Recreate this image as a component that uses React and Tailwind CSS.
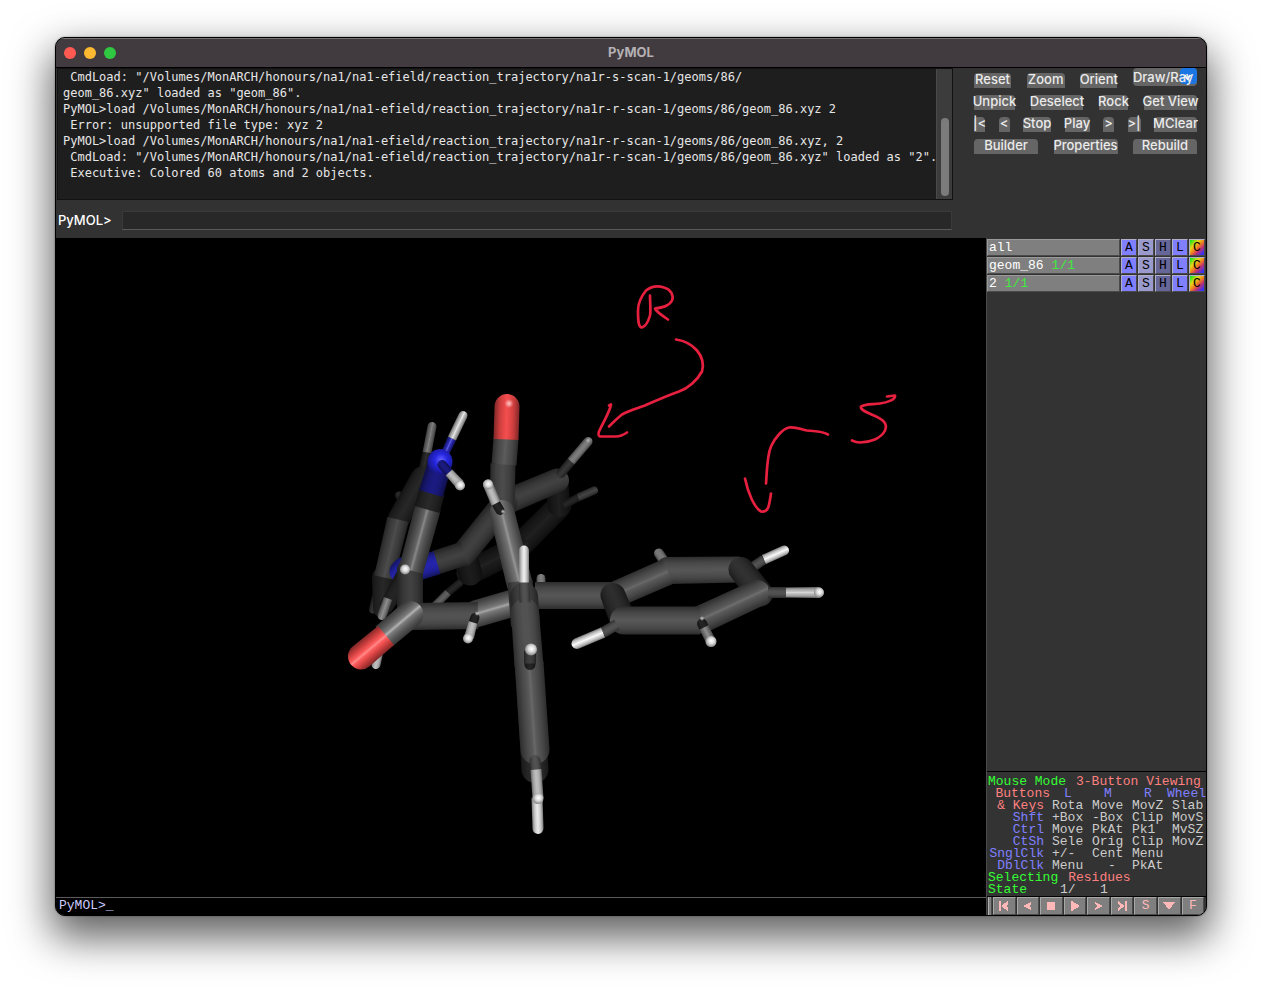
import React from "react";

const logLines = [
  ' CmdLoad: "/Volumes/MonARCH/honours/na1/na1-efield/reaction_trajectory/na1r-s-scan-1/geoms/86/',
  'geom_86.xyz" loaded as "geom_86".',
  "PyMOL>load /Volumes/MonARCH/honours/na1/na1-efield/reaction_trajectory/na1r-r-scan-1/geoms/86/geom_86.xyz 2",
  " Error: unsupported file type: xyz 2",
  "PyMOL>load /Volumes/MonARCH/honours/na1/na1-efield/reaction_trajectory/na1r-r-scan-1/geoms/86/geom_86.xyz, 2",
  ' CmdLoad: "/Volumes/MonARCH/honours/na1/na1-efield/reaction_trajectory/na1r-r-scan-1/geoms/86/geom_86.xyz" loaded as "2".',
  " Executive: Colored 60 atoms and 2 objects.",
];

/* Sticks, back to front: x1, y1, x2, y2, width at start, width at end, colour, shine, caps (s = start, e = end) */
const C1 = [26, 26, 26];
const C2 = [36, 36, 36];
const C3 = [62, 62, 62];
const C4 = [82, 82, 82];
const C5 = [100, 100, 100];
const H1 = [125, 125, 125];
const H2 = [188, 188, 188];
const H3 = [222, 222, 222];
const RED = [232, 70, 70];
const BLUE = [26, 26, 128];
const BLUE2 = [36, 36, 170];
const NB = [38, 38, 225];

const sticks = [
  /* rear ring */
  [559, 506, 517, 548, 24, 25, C1, 6, "se"],
  [517, 548, 469, 572, 25, 25, C1, 8, "se"],
  [459, 583, 448, 592, 8, 8, C2, 4, "s"],
  [448, 592, 433, 607, 8, 8, [95, 95, 95], 0, "e"],
  [465, 553, 470, 573, 24, 24, C1, 2, "se"],
  [557, 480, 559, 505, 22, 23, C1, 6, "se"],
  [557, 480, 505, 502, 24, 25, C3, 4, "se"],
  [505, 502, 464, 553, 25, 25, C3, 2, "se"],
  [561, 473, 571, 461, 9, 9, [52, 52, 52], 4, "s"],
  [571, 461, 588, 441, 9, 9, H1, 0, "e"],
  [588, 440, 588, 440, 5, 5, H1, 60, "glow"],
  [567, 503, 578, 497, 8, 8, C2, 2, "s"],
  [578, 497, 594, 490, 8, 8, [62, 62, 62], 8, "e"],
  [464, 553, 436, 562, 24, 24, C3, 4, ""],
  [437, 562, 408, 571, 24, 24, BLUE2, 0, ""],
  /* left ring */
  [399, 495, 400, 497, 8, 8, C2, 10, "se"],
  [423, 470, 427, 452, 9, 9, C2, 12, ""],
  [427, 452, 432, 426, 9, 9, [105, 105, 105], 25, "e"],
  [376, 596, 373, 609, 8, 8, [48, 48, 48], 4, "e"],
  [379, 650, 376, 664, 9, 9, H2, 0, "e"],
  [383, 577, 382, 608, 22, 18, C2, 4, "se"],
  [422, 477, 399, 518, 22, 22, C2, 4, "se"],
  [398, 519, 384, 577, 22, 20, [65, 65, 65], 12, ""],
  [404, 568, 401, 571, 23, 23, BLUE2, 0, "se"],
  [405, 575, 385, 608, 18, 14, C2, 0, ""],
  [388, 598, 382, 615, 9, 9, H1, 20, "e"],
  /* amine column */
  [410, 570, 410, 614, 26, 26, C3, 4, "se"],
  [428, 507, 411, 570, 26, 25, C4, 55, ""],
  [432, 491, 427, 509, 26, 26, [38, 38, 38], 4, ""],
  [440, 463, 431, 493, 24, 25, BLUE, 0, ""],
  [445, 453, 452, 438, 8, 9, BLUE2, 70, ""],
  [452, 438, 463, 415, 9, 9, H2, 50, "e"],
  [440, 461, 440, 461, 25, 25, NB, 60, "ball"],
  [442, 464, 450, 473, 9, 9, BLUE, 0, "s"],
  [449, 472, 460, 484, 9, 10, H2, 0, ""],
  [460, 485, 460, 485, 10, 10, H3, 40, "ball"],
  /* carbonyl and chain */
  [541, 578, 541, 598, 9, 9, H1, 0, "s"],
  [477, 613, 525, 599, 27, 27, C5, 65, "s"],
  [412, 616, 478, 615, 27, 27, C4, 0, ""],
  [410, 614, 384, 636, 27, 26, C5, 80, "s"],
  [386, 635, 361, 656, 25, 26, RED, 70, "e"],
  [405, 569, 405, 569, 10, 10, H3, 30, "ball"],
  [475, 617, 473, 622, 9, 9, C2, 0, "s"],
  [477, 613, 477, 613, 5, 5, H2, 20, "glow"],
  [473, 622, 469, 637, 9, 10, H2, 0, ""],
  [468, 638, 468, 638, 10, 10, H3, 40, "ball"],
  /* phenyl on the right */
  [535, 595, 612, 595, 27, 27, C4, 4, "e"],
  [659, 553, 665, 562, 10, 10, H1, -10, "s"],
  [740, 569, 668, 570, 26, 27, C4, 4, "e"],
  [613, 595, 668, 571, 26, 27, C4, 22, "s"],
  [749, 569, 764, 559, 10, 10, C4, 0, ""],
  [764, 559, 784, 550, 10, 10, H3, 30, "e"],
  [741, 569, 760, 593, 25, 26, [48, 48, 48], 2, "se"],
  [757, 593, 701, 619, 27, 28, C4, 28, "se"],
  [613, 595, 623, 620, 25, 26, [44, 44, 44], 2, "se"],
  [624, 620, 700, 620, 28, 28, C4, 6, "s"],
  [768, 592, 786, 592, 11, 11, C4, 0, ""],
  [786, 592, 818, 592, 10, 11, H2, 25, "e"],
  [819, 592, 819, 592, 10, 10, H3, 40, "ball"],
  [702, 623, 704, 627, 10, 10, C2, 0, "s"],
  [702, 618, 702, 618, 5, 5, H2, 20, "glow"],
  [704, 627, 710, 639, 10, 10, H1, 20, ""],
  [711, 641, 711, 641, 11, 11, H3, 40, "ball"],
  [617, 624, 603, 632, 11, 11, C4, 0, ""],
  [603, 632, 577, 643, 11, 11, H3, 30, "e"],
  /* ketone column */
  [503, 463, 502, 512, 25, 25, [72, 72, 72], 4, "e"],
  [506, 438, 504, 464, 25, 25, C4, 10, ""],
  [507, 406, 506, 439, 25, 25, RED, 10, "s"],
  [509, 403, 509, 403, 9, 9, RED, 130, "glow"],
  [502, 512, 520, 585, 25, 26, C5, 50, "s"],
  [488, 484, 496, 503, 10, 10, H2, 0, "s"],
  [496, 503, 500, 510, 9, 9, C2, 0, "e"],
  [503, 511, 503, 511, 5, 5, H2, 20, "glow"],
  [488, 484, 488, 484, 10, 10, H3, 40, "ball"],
  /* edge-on phenyl */
  [520, 581, 524, 625, 25, 26, [74, 74, 74], 0, ""],
  [524, 596, 527, 625, 28, 26, [66, 66, 66], 0, "s"],
  [526, 620, 535, 769, 27, 27, [44, 44, 44], 0, "e"],
  [525, 612, 529, 665, 28, 29, C4, 0, "s"],
  [529, 662, 535, 749, 29, 29, C4, 22, "e"],
  [524, 582, 525, 602, 10, 11, C4, 0, ""],
  [524, 550, 524, 582, 10, 10, H3, 20, "s"],
  [530, 655, 530, 664, 11, 11, C2, 0, "e"],
  [530, 650, 530, 663, 12, 12, C3, 0, ""],
  [531, 649, 531, 649, 12, 12, H3, 40, "ball"],
  [537, 797, 538, 828, 11, 11, H3, 10, "e"],
  [535, 760, 536, 769, 11, 11, C4, 0, "s"],
  [536, 769, 538, 798, 11, 11, H2, 0, ""],
  [538, 798, 538, 798, 11, 11, H3, 40, "ball"],
];

const shade = (c, k, add = 0) =>
  `rgb(${c.map((v) => Math.max(0, Math.min(255, Math.round(v * k + add)))).join(",")})`;

function Stick({ s, id }) {
  const [x1, y1, x2, y2, w1, w2, color, shine, caps] = s;
  if (caps === "glow") {
    return (
      <g>
        <radialGradient id={id}>
          <stop offset="0" stopColor={shade(color, 1, shine)} />
          <stop offset="1" stopColor={shade(color, 1, shine)} stopOpacity="0" />
        </radialGradient>
        <circle cx={x1} cy={y1} r={w1 / 2} fill={`url(#${id})`} />
      </g>
    );
  }
  if (caps === "ball") {
    return (
      <g>
        <radialGradient id={id} cx="0.54" cy="0.44" r="0.56">
          <stop offset="0" stopColor={shade(color, 1, shine)} />
          <stop offset="0.45" stopColor={shade(color, 1)} />
          <stop offset="1" stopColor={shade(color, 0.6)} />
        </radialGradient>
        <circle cx={x1} cy={y1} r={w1 / 2} fill={`url(#${id})`} />
      </g>
    );
  }
  const len = Math.hypot(x2 - x1, y2 - y1);
  const nx = -(y2 - y1) / len;
  const ny = (x2 - x1) / len;
  const a = w1 / 2;
  const b = w2 / 2;
  const half = Math.max(a, b);
  const end = caps.includes("e") ? `A ${b} ${b} 0 0 0` : "L";
  const startBack = caps.includes("s") ? `A ${a} ${a} 0 0 0 ${x1 + nx * a} ${y1 + ny * a} Z` : "Z";
  const d = `M ${x1 + nx * a} ${y1 + ny * a} L ${x2 + nx * b} ${y2 + ny * b} ${end} ${x2 - nx * b} ${y2 - ny * b} L ${x1 - nx * a} ${y1 - ny * a} ${startBack}`;
  return (
    <g>
      <linearGradient
        id={id}
        gradientUnits="userSpaceOnUse"
        x1={x1 + nx * half}
        y1={y1 + ny * half}
        x2={x1 - nx * half}
        y2={y1 - ny * half}
      >
        <stop offset="0" stopColor={shade(color, 0.55)} />
        <stop offset="0.22" stopColor={shade(color, 0.87)} />
        <stop offset="0.42" stopColor={shade(color, 1, shine * 0.3)} />
        <stop offset="0.5" stopColor={shade(color, 1, shine)} />
        <stop offset="0.58" stopColor={shade(color, 1, shine * 0.3)} />
        <stop offset="0.78" stopColor={shade(color, 0.87)} />
        <stop offset="1" stopColor={shade(color, 0.55)} />
      </linearGradient>
      <path d={d} fill={`url(#${id})`} />
    </g>
  );
}

function Molecule() {
  return (
    <svg
      viewBox="56 238 930 658"
      className="block h-full w-full"
      role="img"
      aria-label="Molecule with R and S annotations"
    >
      {sticks.map((s, i) => (
        <Stick key={i} s={s} id={`stick${i}`} />
      ))}
      <g fill="none" stroke="#e8203f" strokeWidth="2.7" strokeLinecap="round" strokeLinejoin="round">
        <path d="M650 295 C650 302 651 311 650 315 C648 322 645 326 642 327 C638 327 638 318 638 310 C638 301 642 295 646 290 C651 286 658 285 664 287 C671 289 674 295 672 300 C669 306 662 307 655 308 C656 311 662 315 668 319" />
        <path d="M676 339 C683 340 691 343 697 350 C702 356 704 364 702 371 C697 380 688 388 679 391 C665 396 654 401 645 405 C637 408 629 410 622 414 C617 418 613 422 609 426" />
        <path d="M609 405 L611 404 C610 411 603 422 599 431 C598 434 598 435 600 436 L616 436 C621 436 624 434 627 432" />
        <path d="M828 434 C820 430 816 431 807 430 C801 429 796 426 789 427 C783 428 775 437 771 446 C767 455 767 470 766 483" />
        <path d="M745 478 C748 492 754 507 761 511 C769 512 769 505 771 493" />
        <path d="M887 396 L895 395 C896 399 887 402 880 403 C873 404 865 403 861 406 C860 410 868 412 874 415 C883 419 888 423 885 430 C881 438 870 442 860 442 C857 442 854 441 852 440" />
      </g>
    </svg>
  );
}

function PanelButton({ label, width }) {
  return (
    <button
      type="button"
      className={`flex h-[15px] items-center justify-center rounded-t-[4px] bg-[#656565] pb-[3px] leading-[15px] whitespace-nowrap text-[#ebebeb] ${width}`}
    >
      {label}
    </button>
  );
}

function ControlPanel() {
  return (
    <div className="flex w-[253px] shrink-0 flex-col gap-[7px] pt-[5px] pr-[9px] pl-[21px] font-['Inter','Liberation_Sans',sans-serif] text-[13px] font-medium">
      <div className="flex h-[15px] items-center justify-between">
        <PanelButton label="Reset" width="w-[37px]" />
        <PanelButton label="Zoom" width="w-[38px]" />
        <PanelButton label="Orient" width="w-[37px]" />
        <div className="relative mb-2 h-[18px] w-16 rounded-[4px] bg-[#656565]">
          <div className="absolute top-0 right-0 flex h-4 w-[17px] items-center justify-center rounded-[4px] bg-[#1a76e2]">
            <svg viewBox="0 0 16 16" className="h-4 w-4" fill="none" stroke="#fff" strokeWidth="1.8">
              <path d="M4.500 7 L7.500 11 L10.500 7" />
            </svg>
          </div>
          <select
            aria-label="Draw/Ray"
            className="absolute inset-0 w-full appearance-none bg-transparent text-[#ebebeb]"
          >
            <option>Draw/Ray</option>
          </select>
        </div>
      </div>
      <div className="flex justify-between">
        <PanelButton label="Unpick" width="w-[41px]" />
        <PanelButton label="Deselect" width="w-[52px]" />
        <PanelButton label="Rock" width="w-[29px]" />
        <PanelButton label="Get View" width="w-[53px]" />
      </div>
      <div className="flex justify-between">
        <PanelButton label="|<" width="w-[11px]" />
        <PanelButton label="<" width="w-[11px]" />
        <PanelButton label="Stop" width="w-[28px]" />
        <PanelButton label="Play" width="w-[25px]" />
        <PanelButton label=">" width="w-[11px]" />
        <PanelButton label=">|" width="w-[13px]" />
        <PanelButton label="MClear" width="w-[43px]" />
      </div>
      <div className="flex justify-between">
        <PanelButton label="Builder" width="w-16" />
        <PanelButton label="Properties" width="w-16" />
        <PanelButton label="Rebuild" width="w-16" />
      </div>
    </div>
  );
}

const objects = [
  { name: "all", state: "" },
  { name: "geom_86", state: "1/1" },
  { name: "2", state: "1/1" },
];

const bevel = "border border-t-[#b0b0c8] border-l-[#b0b0c8] border-r-[#4a4a4a] border-b-[#4a4a4a]";
const menus = [
  ["A", "bg-[#8080ff]"],
  ["S", "bg-[#9a9acc]"],
  ["H", "bg-[#666699]"],
  ["L", "bg-[#8080ff]"],
  ["C", "bg-[linear-gradient(135deg,#18e818_5%,#e8d818_32%,#f07a20_52%,#c03070_68%,#3030ff_92%)]"],
];

function ObjectList() {
  return (
    <ul className="flex flex-1 flex-col pt-px pr-px">
      {objects.map((o) => (
        <li key={o.name} className="flex h-[18px] gap-px pb-px">
          <button
            type="button"
            className="flex flex-1 items-center gap-2 border border-t-[#9a9a9a] border-r-[#4a4a4a] border-b-[#4a4a4a] border-l-[#9a9a9a] bg-[#7f7f7f] pl-px text-white"
          >
            <span>{o.name}</span>
            {o.state && <span className="text-[#40e840]">{o.state}</span>}
          </button>
          {menus.map(([letter, bg]) => (
            <button key={letter} type="button" className={`flex w-4 items-center justify-center text-black ${bevel} ${bg}`}>
              {letter}
            </button>
          ))}
        </li>
      ))}
    </ul>
  );
}

const mouseRows = [
  ["& Keys", "Rota", "Move", "MovZ", "Slab"],
  ["Shft", "+Box", "-Box", "Clip", "MovS"],
  ["Ctrl", "Move", "PkAt", "Pk1", "MvSZ"],
  ["CtSh", "Sele", "Orig", "Clip", "MovZ"],
  ["SnglClk", "+/-", "Cent", "Menu", ""],
  ["DblClk", "Menu", "-", "PkAt", ""],
];

function MousePanel() {
  return (
    <div className="border-t border-black pt-1 pl-px leading-3 whitespace-nowrap text-[#cccccc]">
      <p className="flex gap-2.5 text-[#33ff33]">
        Mouse Mode <span className="text-[#ff8080]">3-Button Viewing</span>
      </p>
      <table className="w-full table-fixed border-collapse">
        <colgroup>
          <col className="w-16" />
          <col className="w-10" />
          <col className="w-10" />
          <col className="w-10" />
          <col />
        </colgroup>
        <thead>
          <tr className="text-[#8080ff]">
            <th className="p-0 pr-[2px] text-right font-normal text-[#ff8080]">Buttons</th>
            <th className="p-0 pl-3 text-left font-normal">L</th>
            <th className="p-0 pl-3 text-left font-normal">M</th>
            <th className="p-0 pl-3 text-left font-normal">R</th>
            <th className="p-0 font-normal">
              <span className="flex justify-end">Wheel</span>
            </th>
          </tr>
        </thead>
        <tbody>
          {mouseRows.map((row, i) => (
            <tr key={row[0]}>
              <th className={`p-0 pr-2 text-right font-normal ${i === 0 ? "text-[#ff8080]" : "text-[#8080ff]"}`}>
                {row[0]}
              </th>
              {row.slice(1).map((cell, j) => (
                <td key={j} className={`p-0 ${cell === "-" ? "pl-4" : ""}`}>
                  {cell}
                </td>
              ))}
            </tr>
          ))}
        </tbody>
      </table>
      <p className="flex gap-2.5 text-[#33ff33]">
        Selecting <span className="text-[#ff8080]">Residues</span>
      </p>
      <p className="flex text-[#33ff33]">
        <span className="w-[72px]">State</span>
        <span className="w-10 text-[#cccccc]">1/</span>
        <span className="text-[#cccccc]">1</span>
      </p>
    </div>
  );
}

const playback = [
  ["Rewind", <path key="p" d="M5 5h2v10H5zM7 10l7-5v3l-2 2 2 2v3z" />],
  ["Back", <path key="p" d="M5 10l8-4v2l-2 2 2 2v2z" />],
  ["Stop", <path key="p" d="M6 6h8v8H6z" />],
  ["Play", <path key="p" d="M6 4.5l9 5.5-9 5.5z" />],
  ["Forward", <path key="p" d="M14 10L6 6v2l2 2-2 2v2z" />],
  ["End", <path key="p" d="M13 5h2v10h-2zM13 10L6 5v3l2 2-2 2v3z" />],
  ["S", null],
  ["Menu", <path key="p" d="M4 6h12l-6 8z" />],
  ["F", null],
];

function PlaybackBar() {
  return (
    <div className="flex h-[19px] gap-px border-t border-black pr-[2px] pl-px">
      <span className="w-1 border-r border-l border-r-[#4a4a4a] border-l-[#b0b0b0] bg-[#7f7f7f]" />
      {playback.map(([name, icon]) => (
        <button
          key={name}
          type="button"
          aria-label={name}
          className="flex flex-1 items-center justify-center border border-t-[#a8a8a8] border-r-[#4a4a4a] border-b-[#4a4a4a] border-l-[#a8a8a8] bg-[#7f7f7f] text-[#ffb8b8]"
        >
          {icon ? (
            <svg viewBox="0 0 20 20" className="h-5 w-5 shrink-0" fill="#ffb8b8" shapeRendering="crispEdges">
              {icon}
            </svg>
          ) : (
            name
          )}
        </button>
      ))}
    </div>
  );
}

export default function App() {
  return (
    <div className="flex min-h-screen flex-col bg-white px-[55px] pt-[37px] pb-[73px]">
      <main className="flex flex-1 flex-col overflow-hidden rounded-[10px] border border-black bg-[#323232] shadow-[0_0_2px_rgba(0,0,0,0.4),0_18px_40px_4px_rgba(0,0,0,0.62)]">
        <header className="grid h-[30px] shrink-0 grid-cols-3 items-center border-t border-b border-t-[#777377] border-b-black bg-[#413b3f]">
          <div className="flex gap-2 pl-2">
            <button type="button" aria-label="Close" className="h-3 w-3 rounded-full bg-[#ff5a52]" />
            <button type="button" aria-label="Minimise" className="h-3 w-3 rounded-full bg-[#fdb932]" />
            <button type="button" aria-label="Full screen" className="h-3 w-3 rounded-full bg-[#2fc840]" />
          </div>
          <h1 className="text-center font-['Inter','Liberation_Sans',sans-serif] text-[13px] font-bold text-[#b4b0b3]">
            PyMOL
          </h1>
        </header>

        <section className="flex h-[170px] shrink-0">
          <div className="flex min-w-0 flex-1 flex-col pl-px">
            <div className="flex h-[132px] border border-[#121212] bg-[#1e1e1e]">
              <pre className="min-w-0 flex-1 pl-[5px] font-['DejaVu_Sans_Mono','Liberation_Mono',monospace] text-[12px] leading-4 text-[#e6e6e6]">
                {logLines.join("\n")}
              </pre>
              <div className="flex w-4 flex-col items-center justify-end border-l border-[#4a4a4a] bg-[#3c3c3c] pb-[3px]">
                <div className="h-[78px] w-2 rounded-full bg-[#7b7b7b]" />
              </div>
            </div>
            <div className="flex items-center gap-3 pt-[11px] pl-px">
              <label
                htmlFor="command"
                className="w-[52px] font-['Inter','Liberation_Sans',sans-serif] text-[13px] font-medium whitespace-nowrap text-white"
              >
                PyMOL&gt;
              </label>
              <input
                id="command"
                type="text"
                className="mr-px h-[19px] min-w-0 flex-1 border border-t-[#3a3a3a] border-r-[#3a3a3a] border-b-[#5a5a5a] border-l-[#3a3a3a] bg-[#282828] px-1 text-[13px] text-white outline-none"
              />
            </div>
          </div>
          <ControlPanel />
        </section>

        <section className="flex min-h-0 flex-1 font-['Liberation_Mono',monospace] text-[13px]">
          <div className="flex min-w-0 flex-1 flex-col bg-black">
            <div className="min-h-0 flex-1 basis-0">
              <Molecule />
            </div>
            <p className="h-[18px] shrink-0 border-t border-[#5a5a5a] pl-[3px] leading-4 text-[#ccccff]">PyMOL&gt;_</p>
          </div>
          <aside className="flex w-[220px] shrink-0 flex-col border-l border-[#4a4a4a] bg-[#333333]">
            <ObjectList />
            <MousePanel />
            <PlaybackBar />
          </aside>
        </section>
      </main>
    </div>
  );
}
